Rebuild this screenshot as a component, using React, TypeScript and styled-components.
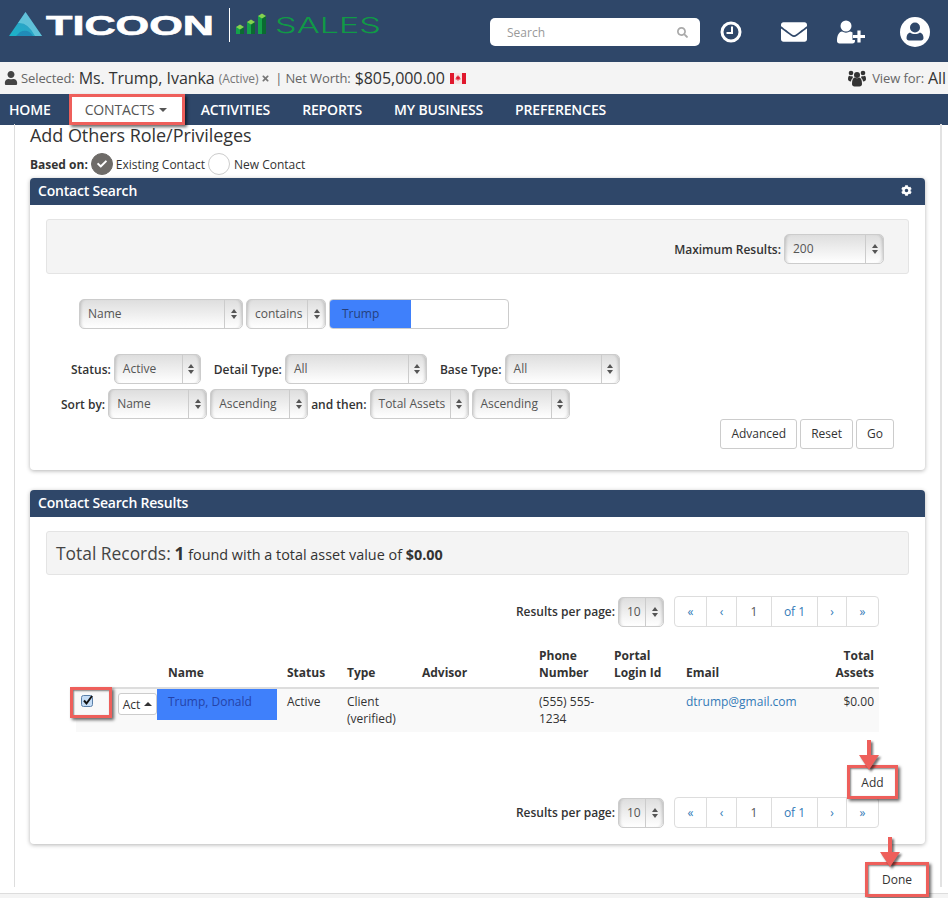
import React from "react";
import styled, { createGlobalStyle } from "styled-components";
import { FaUser, FaEnvelope, FaCog, FaTimes, FaSearch, FaCheck } from "react-icons/fa";

const navy = "#2f4769";
const red = "#ee5f5b";

const GlobalStyle = createGlobalStyle`
  html, body {
    margin: 0;
    padding: 0;
    background: #fff;
    font-family: "Open Sans", "Liberation Sans", sans-serif;
    font-size: 12px;
    color: #333;
  }
`;

const Page = styled.div`
  position: relative;
  width: 948px;
  height: 898px;
  overflow: hidden;
`;

const Header = styled.header`
  height: 62px;
  background: ${navy};
  display: flex;
  align-items: flex-start;
`;

const LogoSvg = styled.svg`
  width: 400px;
  height: 50px;
  flex: none;
`;

const SearchBox = styled.div`
  width: 210px;
  height: 28px;
  margin: 18px 0 0 90px;
  padding: 0 12px 0 17px;
  box-sizing: border-box;
  background: #fff;
  border-radius: 5px;
  display: flex;
  align-items: center;
  justify-content: space-between;
  color: #999;
  font-size: 12px;
  flex: none;
`;

const HeaderIcon = styled.div<{ $left: number }>`
  margin: 17px 0 0 ${(p) => p.$left}px;
  height: 30px;
  display: flex;
  align-items: center;
  color: #fff;
  flex: none;
`;

const StatusBar = styled.div`
  height: 32px;
  background: #f4f4f4;
  display: flex;
  align-items: center;
  justify-content: space-between;
  padding: 0 2px 0 4px;
  color: #666;
  font-size: 13px;
  letter-spacing: -0.1px;
`;

const StatusGroup = styled.div`
  display: flex;
  align-items: center;
  white-space: nowrap;
`;

const StatusValue = styled.span`
  font-size: 16px;
  color: #333;
  margin-left: 4px;
  letter-spacing: -0.05px;
`;

const Muted = styled.span`
  font-size: 12px;
  color: #777;
  margin-left: 4px;
`;

const Pipe = styled.span`
  margin-right: 3px;
`;

const Nav = styled.nav`
  height: 31px;
  background: ${navy};
  display: flex;
  align-items: stretch;
`;

const NavItem = styled.div<{ $active?: boolean }>`
  display: flex;
  align-items: center;
  gap: 5px;
  padding: 0 16px;
  font-size: 14px;
  font-weight: 600;
  letter-spacing: -0.15px;
  color: #fff;
  white-space: nowrap;
  &:first-child {
    padding: 0 18px 0 9px;
  }
  ${(p) =>
    p.$active &&
    `
    background: #fff;
    color: #555;
    font-weight: 400;
    width: 116px;
    height: 31px;
    box-sizing: border-box;
    border: 3px solid ${red};
    box-shadow: 2px 2px 3px rgba(0,0,0,.6);
    padding: 0 0 0 13px;
  `}
`;

const Caret = styled.span<{ $up?: boolean }>`
  display: inline-block;
  width: 0;
  height: 0;
  border-left: 4px solid transparent;
  border-right: 4px solid transparent;
  ${(p) => (p.$up ? "border-bottom: 4px solid #333;" : "border-top: 4px solid #555;")}
`;

const Frame = styled.main`
  margin: 5px 6px 0 14px;
  height: 763px;
  padding: 0 15px;
  border-left: 1px solid #ddd;
  border-right: 2px solid #e2e2e2;
`;

const Title = styled.h1`
  margin: -6px 0 0;
  font-size: 18px;
  line-height: 22px;
  font-weight: 400;
  color: #333;
  letter-spacing: -0.05px;
`;

const BasedOn = styled.div`
  height: 22px;
  margin: 7px 0 3px;
  display: flex;
  align-items: center;
  gap: 3px;
`;

const Strong = styled.b`
  font-weight: 700;
  color: #333;
`;

const Radio = styled.span<{ $checked?: boolean }>`
  width: 22px;
  height: 22px;
  box-sizing: border-box;
  border-radius: 50%;
  display: flex;
  align-items: center;
  justify-content: center;
  color: #fff;
  background: ${(p) => (p.$checked ? "#6e6b68" : "#fff")};
  border: 1px solid ${(p) => (p.$checked ? "#6e6b68" : "#ccc")};
`;

const RadioText = styled.span`
  margin-left: 1px;
`;

const Panel = styled.section`
  width: 895px;
  border-radius: 4px;
  background: #fff;
  box-shadow: 0 1px 4px rgba(0, 0, 0, 0.3);
  margin-bottom: 20px;
`;

const PanelHead = styled.div`
  height: 27px;
  padding: 0 8px 2px;
  box-sizing: border-box;
  background: ${navy};
  border-radius: 4px 4px 0 0;
  color: #fff;
  font-size: 14px;
  font-weight: 600;
  letter-spacing: -0.2px;
  display: flex;
  align-items: center;
  justify-content: space-between;
`;

const GearIcon = styled(FaCog)`
  margin-right: 5px;
`;

const PanelBody = styled.div<{ $bottom: number }>`
  padding: 14px 16px ${(p) => p.$bottom}px;
`;

const Well = styled.div<{ $h: number }>`
  height: ${(p) => p.$h}px;
  box-sizing: border-box;
  background: #f4f4f4;
  border: 1px solid #e4e4e4;
  border-radius: 3px;
  display: flex;
  align-items: center;
`;

const MaxWrap = styled.div`
  margin: 5px 24px 0 auto;
  display: flex;
  align-items: center;
  gap: 3px;
`;

const Row = styled.div<{ $left: number; $top: number }>`
  display: flex;
  align-items: center;
  gap: 3px;
  margin: ${(p) => p.$top}px 0 0 ${(p) => p.$left}px;
`;

const Label = styled.span<{ $gapLeft?: number }>`
  font-weight: 600;
  color: #333;
  white-space: nowrap;
  margin-left: ${(p) => p.$gapLeft ?? 0}px;
`;

const SelectBox = styled.div<{ $w: number }>`
  width: ${(p) => p.$w}px;
  height: 30px;
  box-sizing: border-box;
  border: 1px solid #ccc;
  border-radius: 5px;
  background: linear-gradient(#dedede, #fff);
  box-shadow: inset 3px 0 3px -2px rgba(0, 0, 0, 0.18);
  display: flex;
  color: #555;
  flex: none;
`;

const SelectText = styled.span`
  flex: 1;
  padding-left: 8px;
  line-height: 28px;
  white-space: nowrap;
  overflow: hidden;
`;

const SelectArrows = styled.span`
  width: 17px;
  border-left: 1px solid #ccc;
  display: flex;
  flex-direction: column;
  align-items: center;
  justify-content: center;
  gap: 2px;
  flex: none;
  box-shadow: inset -3px 0 3px -2px rgba(0, 0, 0, 0.18);
  border-radius: 0 5px 5px 0;
  i {
    display: block;
    width: 0;
    height: 0;
    border-left: 3px solid transparent;
    border-right: 3px solid transparent;
  }
  i:first-child {
    border-bottom: 4px solid #555;
  }
  i:last-child {
    border-top: 4px solid #555;
  }
`;

const TextInput = styled.div`
  width: 180px;
  height: 30px;
  box-sizing: border-box;
  border: 1px solid #ccc;
  border-radius: 4px;
  background: #fff;
  display: flex;
  overflow: hidden;
`;

const HighlightedValue = styled.span`
  width: 81px;
  background: #3f80fb;
  color: #263f7c;
  padding-left: 12px;
  box-sizing: border-box;
  line-height: 28px;
`;

const ButtonRow = styled.div`
  display: flex;
  justify-content: flex-end;
  gap: 3px;
  margin-right: 15px;
`;

const Button = styled.button`
  height: 30px;
  padding: 0 10px 2px;
  background: #fff;
  border: 1px solid #ccc;
  border-radius: 3px;
  font: inherit;
  color: #333;
`;

const RecordsText = styled.span`
  margin-left: 9px;
  font-size: 14.4px;
  em {
    font-style: normal;
    font-size: 17.4px;
    color: #444;
  }
  b {
    font-weight: 700;
  }
  strong {
    font-size: 17.4px;
    font-weight: 700;
  }
`;

const PagerRow = styled.div<{ $top: number }>`
  display: flex;
  align-items: center;
  justify-content: flex-end;
  gap: 3px;
  margin: ${(p) => p.$top}px 30px 0 0;
`;

const Pager = styled.div`
  display: flex;
  height: 31px;
  box-sizing: border-box;
  border: 1px solid #ddd;
  border-radius: 4px;
  margin-left: 7px;
  color: #337ab7;
`;

const PagerCell = styled.span<{ $w: number; $current?: boolean }>`
  width: ${(p) => p.$w}px;
  box-sizing: border-box;
  display: flex;
  align-items: center;
  justify-content: center;
  color: ${(p) => (p.$current ? "#555" : "#337ab7")};
  border-right: 1px solid #ddd;
  &:last-child {
    border-right: 0;
  }
`;

const Table = styled.table`
  table-layout: fixed;
  width: 803px;
  margin: 20px 0 0 30px;
  border-collapse: collapse;
  th {
    height: 40px;
    padding: 0 10px 6px;
    box-sizing: border-box;
    font-weight: 700;
    text-align: left;
    vertical-align: bottom;
    line-height: 17px;
    border-bottom: 2px solid #ddd;
    color: #333;
  }
  td {
    height: 44px;
    padding: 4px 0 4px 10px;
    box-sizing: border-box;
    vertical-align: top;
    line-height: 17px;
    background: #f9f9f9;
    color: #333;
  }
`;

const RightCell = styled.th`
  && {
    text-align: right;
    padding-right: 5px;
  }
`;

const RightData = styled.td`
  && {
    text-align: right;
    padding-right: 5px;
  }
`;

const NameHead = styled.th`
  && {
    padding-left: 11px;
  }
`;

const CheckCell = styled.td`
  && {
    position: relative;
    padding: 0;
  }
`;

const ActCell = styled.td`
  && {
    padding: 4px 0 0;
  }
`;

const NameCell = styled.td`
  && {
    padding: 0;
  }
`;

const NameFill = styled.div`
  height: 31px;
  padding: 4px 0 0 11px;
  box-sizing: border-box;
  background: #3f80fb;
  color: #2543a8;
`;

const ActButton = styled.span`
  width: 39px;
  height: 22px;
  box-sizing: border-box;
  border: 1px solid #ccc;
  border-radius: 3px;
  background: #fff;
  display: flex;
  align-items: center;
  justify-content: center;
  gap: 4px;
`;

const CheckMark = styled.svg`
  position: absolute;
  left: 5px;
  top: 5px;
  z-index: 3;
`;

const CheckHighlight = styled.div`
  position: absolute;
  left: -6px;
  top: -2px;
  width: 42px;
  height: 31px;
  box-sizing: border-box;
  border: 3px solid ${red};
  box-shadow: 2px 2px 3px rgba(0, 0, 0, 0.6), inset 1px 1px 2px rgba(0, 0, 0, 0.5);
`;

const EmailLink = styled.span`
  color: #337ab7;
`;

const CalloutWrap = styled.div<{ $w: number; $h: number; $right: number; $top: number; $bottom: number }>`
  position: relative;
  z-index: 2;
  width: ${(p) => p.$w}px;
  height: ${(p) => p.$h}px;
  box-sizing: border-box;
  margin: ${(p) => p.$top}px ${(p) => p.$right}px ${(p) => p.$bottom}px auto;
  border: 3px solid ${red};
  background: #fff;
  box-shadow: 2px 2px 3px rgba(0, 0, 0, 0.6), inset 1px 1px 2px rgba(0, 0, 0, 0.5);
  display: flex;
  align-items: center;
  justify-content: center;
  color: #333;
`;

const Arrow = styled.svg`
  position: absolute;
  overflow: visible;
  top: -28px;
  filter: drop-shadow(2px 2px 1px rgba(0, 0, 0, 0.55));
`;

const Footer = styled.div`
  position: absolute;
  left: 0;
  right: 0;
  bottom: 0;
  height: 4px;
  background: #f4f4f4;
  border-top: 1px solid #ddd;
`;

const Bar = ({ x, top }: { x: number; top: number }) => (
  <g>
    <path d={`M${x} ${top}h4v${34 - top}h-4z`} fill="#14a24a" />
    <path d={`M${x + 4} ${top}h4v${34 - top}h-4z`} fill="#0b6a32" />
    <path d={`M${x} ${top}l4-2.500 4 2.500-4 2.500z`} fill="#84d24f" />
  </g>
);

const Logo = () => (
  <LogoSvg viewBox="0 0 400 50">
    <defs>
      <linearGradient id="tri" x1="0" y1="1" x2="1" y2="0">
        <stop offset="0" stopColor="#19b5c9" />
        <stop offset="1" stopColor="#3d92c4" />
      </linearGradient>
    </defs>
    <path d="M9 36 L25.500 12 L42 36Z" fill="url(#tri)" />
    <path d="M25.500 12 L18 23 Q28 22 35 36 L42 36Z" fill="#8adcea" opacity="0.55" />
    <path d="M20 32 Q28 28 33 36 L16 36Z" fill="#1f7fb2" opacity="0.7" />
    <text x="46" y="35" fontFamily="'Liberation Sans', sans-serif" fontWeight="700" fontSize="27" fill="#fff" stroke="#fff" strokeWidth="0.6" textLength="168" lengthAdjust="spacingAndGlyphs">
      TICOON
    </text>
    <rect x="229" y="8" width="1" height="34" fill="#fff" />
    <Bar x={236} top={27} />
    <Bar x={247} top={22} />
    <Bar x={258} top={16} />
    <text x="275" y="33" fontFamily="Inter, 'Liberation Sans', sans-serif" fontWeight="300" fontSize="21" fill="#109a46" textLength="106" lengthAdjust="spacingAndGlyphs">
      SALES
    </text>
  </LogoSvg>
);

const CanadaFlag = () => (
  <svg width="16" height="11" viewBox="0 0 16 11" style={{ marginLeft: 5 }}>
    <rect width="16" height="11" fill="#f5e4e4" />
    <rect width="4" height="11" fill="#e0182d" />
    <rect x="12" width="4" height="11" fill="#e0182d" />
    <path d="M8 2l1 2 1-.5-.4 2.200 1-.4-.3 1.200H8.300V8h-.6V6.500H5.700l-.3-1.200 1 .4L6 3.500l1 .5z" fill="#e0182d" />
  </svg>
);

const UserPlusIcon = () => (
  <svg width="30" height="24" viewBox="0 0 30 24">
    <circle cx="9" cy="6" r="5.500" fill="#fff" />
    <path d="M0 21c0-6 2-9 5-9.500 2.500 1.500 5.500 1.500 8 0 3 .5 5 3 5 9.500 0 1.500-1 2.500-2.500 2.500h-13C1 23.500 0 22.500 0 21z" fill="#fff" />
    <path d="M22 10v13M15.500 16.500h13" stroke={navy} strokeWidth="7" />
    <path d="M22 10.500v12M16 16.500h12" stroke="#fff" strokeWidth="3.200" />
  </svg>
);

const AccountIcon = () => (
  <svg width="30" height="30" viewBox="0 0 30 30">
    <circle cx="15" cy="15" r="15" fill="#fff" />
    <circle cx="15" cy="10.500" r="5" fill={navy} />
    <path d="M6.500 21c0-3 1.500-5 3.500-5.500 3 2 7 2 10 0 2 .5 3.500 2.500 3.500 5.500 0 1.500-1 2.500-2.500 2.500H9c-1.500 0-2.500-1-2.500-2.500z" fill={navy} />
  </svg>
);

const UsersIcon = () => (
  <svg width="18" height="17" viewBox="0 0 18 17" style={{ marginRight: 6 }}>
    <g fill="#333">
      <circle cx="9" cy="5" r="3" />
      <circle cx="3" cy="3" r="2.300" />
      <circle cx="15" cy="3" r="2.300" />
      <path d="M4 14c0-4 1-6 2.500-6.500 1.500 1 3.500 1 5 0C13 8 14 10 14 14c0 1.500-1 2.500-2.500 2.500h-5C5 16.500 4 15.500 4 14z" />
      <path d="M0 9c0-2 .5-3 1.500-3.300.8.600 2 .8 3 .4-.1.800.1 1.400.5 1.800C3.800 8.500 3 10 3 11.500 1 11.500 0 10.500 0 9z" />
      <path d="M18 9c0-2-.5-3-1.500-3.300-.8.600-2 .8-3 .4.100.800-.1 1.400-.5 1.800 1.200.6 2 2.100 2 3.600 2 0 3-1 3-2.500z" />
    </g>
  </svg>
);

const Select = ({ w, value }: { w: number; value: string }) => (
  <SelectBox $w={w}>
    <SelectText>{value}</SelectText>
    <SelectArrows>
      <i />
      <i />
    </SelectArrows>
  </SelectBox>
);

const Pagination = ({ top }: { top: number }) => (
  <PagerRow $top={top}>
    <Label>Results per page:</Label>
    <Select w={46} value="10" />
    <Pager>
      <PagerCell $w={32}>«</PagerCell>
      <PagerCell $w={30}>‹</PagerCell>
      <PagerCell $w={35} $current>
        1
      </PagerCell>
      <PagerCell $w={46}>of 1</PagerCell>
      <PagerCell $w={29}>›</PagerCell>
      <PagerCell $w={31}>»</PagerCell>
    </Pager>
  </PagerRow>
);

const DownArrow = ({ x }: { x: number }) => (
  <Arrow width="20" height="30" viewBox="0 0 20 30" style={{ left: x }}>
    <path d="M8 0h4v15h8L10 30 0 15h8z" fill={red} />
  </Arrow>
);

export default function App() {
  return (
    <Page>
      <GlobalStyle />
      <Header>
        <Logo />
        <SearchBox>
          Search
          <FaSearch size={11} color="#aaa" />
        </SearchBox>
        <HeaderIcon $left={20}>
          <svg width="22" height="22" viewBox="0 0 22 22">
            <circle cx="11" cy="11" r="9" fill="none" stroke="#fff" strokeWidth="3" />
            <path d="M12 5.500V12H6.500" fill="none" stroke="#fff" strokeWidth="2" />
          </svg>
        </HeaderIcon>
        <HeaderIcon $left={39}>
          <FaEnvelope size={26} />
        </HeaderIcon>
        <HeaderIcon $left={30}>
          <UserPlusIcon />
        </HeaderIcon>
        <HeaderIcon $left={33}>
          <AccountIcon />
        </HeaderIcon>
      </Header>
      <StatusBar>
        <StatusGroup>
          <FaUser size={14} color="#444" style={{ marginRight: 3 }} />
          Selected:
          <StatusValue>Ms. Trump, Ivanka</StatusValue>
          <Muted>(Active)</Muted>
          <FaTimes size={9} color="#777" style={{ margin: "0 5px 0 3px" }} />
          <Pipe>|</Pipe>
          Net Worth:
          <StatusValue>$805,000.00</StatusValue>
          <CanadaFlag />
        </StatusGroup>
        <StatusGroup>
          <UsersIcon />
          View for:
          <StatusValue>All</StatusValue>
        </StatusGroup>
      </StatusBar>
      <Nav>
        <NavItem>HOME</NavItem>
        <NavItem $active>
          CONTACTS <Caret />
        </NavItem>
        <NavItem>ACTIVITIES</NavItem>
        <NavItem>REPORTS</NavItem>
        <NavItem>MY BUSINESS</NavItem>
        <NavItem>PREFERENCES</NavItem>
      </Nav>
      <Frame>
        <Title>Add Others Role/Privileges</Title>
        <BasedOn>
          <Strong>Based on:</Strong>
          <Radio $checked>
            <FaCheck size={10} />
          </Radio>
          Existing Contact
          <Radio />
          <RadioText>New Contact</RadioText>
        </BasedOn>
        <Panel>
          <PanelHead>
            Contact Search
            <GearIcon size={11} />
          </PanelHead>
          <PanelBody $bottom={21}>
            <Well $h={55}>
              <MaxWrap>
                <Label>Maximum Results:</Label>
                <Select w={100} value="200" />
              </MaxWrap>
            </Well>
            <Row $left={33} $top={25}>
              <Select w={164} value="Name" />
              <Select w={80} value="contains" />
              <TextInput>
                <HighlightedValue>Trump</HighlightedValue>
              </TextInput>
            </Row>
            <Row $left={25} $top={25}>
              <Label>Status:</Label>
              <Select w={87} value="Active" />
              <Label $gapLeft={10}>Detail Type:</Label>
              <Select w={142} value="All" />
              <Label $gapLeft={10}>Base Type:</Label>
              <Select w={115} value="All" />
            </Row>
            <Row $left={15} $top={5}>
              <Label>Sort by:</Label>
              <Select w={99} value="Name" />
              <Select w={98} value="Ascending" />
              <Label>and then:</Label>
              <Select w={99} value="Total Assets" />
              <Select w={98} value="Ascending" />
            </Row>
            <ButtonRow>
              <Button>Advanced</Button>
              <Button>Reset</Button>
              <Button>Go</Button>
            </ButtonRow>
          </PanelBody>
        </Panel>
        <Panel>
          <PanelHead>Contact Search Results</PanelHead>
          <PanelBody $bottom={16}>
            <Well $h={44}>
              <RecordsText>
                <em>Total Records:</em> <strong>1</strong> found with a total asset value of <b>$0.00</b>
              </RecordsText>
            </Well>
            <Pagination top={21} />
            <Table>
              <colgroup>
                <col style={{ width: 42 }} />
                <col style={{ width: 39 }} />
                <col style={{ width: 120 }} />
                <col style={{ width: 60 }} />
                <col style={{ width: 75 }} />
                <col style={{ width: 117 }} />
                <col style={{ width: 75 }} />
                <col style={{ width: 72 }} />
                <col style={{ width: 130 }} />
                <col style={{ width: 73 }} />
              </colgroup>
              <thead>
                <tr>
                  <th />
                  <th />
                  <NameHead>Name</NameHead>
                  <th>Status</th>
                  <th>Type</th>
                  <th>Advisor</th>
                  <th>Phone Number</th>
                  <th>Portal Login Id</th>
                  <th>Email</th>
                  <RightCell>Total Assets</RightCell>
                </tr>
              </thead>
              <tbody>
                <tr>
                  <CheckCell>
                    <CheckHighlight />
                    <CheckMark width="14" height="14" viewBox="0 0 14 14">
                      <rect x="0.500" y="1.500" width="11" height="11" rx="2" fill="#c5ddf6" stroke="#5a7fa8" />
                      <path d="M3 6.500l2.500 3L11 2" fill="none" stroke="#111" strokeWidth="2" />
                    </CheckMark>
                  </CheckCell>
                  <ActCell>
                    <ActButton>
                      Act <Caret $up />
                    </ActButton>
                  </ActCell>
                  <NameCell>
                    <NameFill>Trump, Donald</NameFill>
                  </NameCell>
                  <td>Active</td>
                  <td>Client (verified)</td>
                  <td />
                  <td>(555) 555-1234</td>
                  <td />
                  <td>
                    <EmailLink>dtrump@gmail.com</EmailLink>
                  </td>
                  <RightData>$0.00</RightData>
                </tr>
              </tbody>
            </Table>
            <CalloutWrap $w={51} $h={34} $right={11} $top={33} $bottom={-2}>
              Add
              <DownArrow x={9} />
            </CalloutWrap>
            <Pagination top={0} />
          </PanelBody>
        </Panel>
        <CalloutWrap $w={64} $h={35} $right={-4} $top={-2} $bottom={0}>
          Done
          <DownArrow x={12} />
        </CalloutWrap>
      </Frame>
      <Footer />
    </Page>
  );
}
